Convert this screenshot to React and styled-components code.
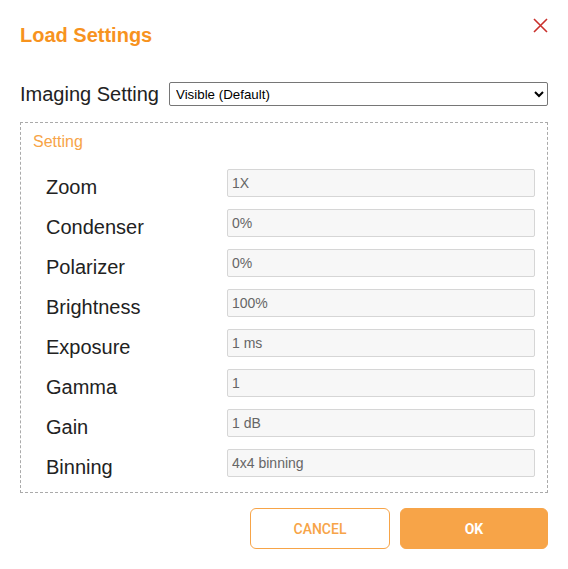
import styled, { createGlobalStyle } from 'styled-components'

const GlobalStyle = createGlobalStyle`
    body {
        margin: 0;
        background: #ffffff;
        font-family: "Liberation Sans", Arial, sans-serif;
    }
`

const Dialog = styled.div`
    position: relative;
    width: 568px;
    box-sizing: border-box;
    padding: 23px 20px 20px;
`

const Title = styled.h2`
    margin: 0;
    font-size: 20px;
    line-height: 24px;
    font-weight: bold;
    color: #f7931e;
`

const CloseButton = styled.button`
    position: absolute;
    top: 17px;
    right: 20px;
    width: 16px;
    height: 16px;
    padding: 0;
    border: none;
    background: none;
    cursor: pointer;
    display: flex;
    align-items: center;
    justify-content: center;
`

const ImagingRow = styled.div`
    display: flex;
    align-items: center;
    gap: 10px;
    margin-top: 35px;
    height: 24px;
`

const ImagingLabel = styled.label`
    font-size: 20px;
    line-height: 24px;
    color: #222;
    white-space: nowrap;
`

const Select = styled.select`
    flex: 1;
    height: 24px;
    font-family: "Liberation Sans", Arial, sans-serif;
    font-size: 13.33px;
    color: #000;
    border: 1px solid #767676;
    border-radius: 2px;
    background: #fff;
    padding: 0 2px;
`

const SettingBox = styled.fieldset`
    margin: 16px 0 0;
    border: 1px dashed #aaaaaa;
    padding: 10px 12px 15px;
`

const BoxTitle = styled.div`
    font-size: 16px;
    line-height: 18px;
    color: #f7a448;
`

const Rows = styled.div`
    display: flex;
    flex-direction: column;
    gap: 12px;
    margin-top: 18px;
    padding-left: 13px;
`

const Row = styled.div`
    display: grid;
    grid-template-columns: 181px 1fr;
    height: 28px;
`

const RowLabel = styled.span`
    font-size: 20px;
    line-height: 24px;
    padding-top: 6px;
    color: #222;
`

const ReadInput = styled.input`
    box-sizing: border-box;
    height: 28px;
    width: 100%;
    margin: 0;
    padding: 0 4px;
    border: 1px solid #d6d6d6;
    border-radius: 2px;
    background: #f7f7f7;
    color: #666;
    font-family: "Liberation Sans", Arial, sans-serif;
    font-size: 14px;
    outline: none;
`

const Footer = styled.div`
    display: flex;
    justify-content: flex-end;
    gap: 10px;
    margin-top: 15px;
`

const Button = styled.button`
    width: ${(p) => (p.$primary ? '148px' : '140px')};
    height: 41px;
    border-radius: 6px;
    border: 1px solid #f7a448;
    background: ${(p) => (p.$primary ? '#f7a448' : '#ffffff')};
    color: ${(p) => (p.$primary ? '#ffffff' : '#f7a448')};
    font-family: Roboto, "Liberation Sans", sans-serif;
    font-size: 14px;
    font-weight: ${(p) => (p.$primary ? 700 : 500)};
    cursor: pointer;
`

const settings = [
    ['Zoom', '1X'],
    ['Condenser', '0%'],
    ['Polarizer', '0%'],
    ['Brightness', '100%'],
    ['Exposure', '1 ms'],
    ['Gamma', '1'],
    ['Gain', '1 dB'],
    ['Binning', '4x4 binning'],
]

const App = () => {
    return (
        <Dialog>
            <GlobalStyle />
            <Title>Load Settings</Title>
            <CloseButton aria-label="close">
                <svg width="15" height="15" viewBox="0 0 15 15">
                    <path d="M1 1 L14 14 M14 1 L1 14" stroke="#c9302c" strokeWidth="1.6" />
                </svg>
            </CloseButton>

            <ImagingRow>
                <ImagingLabel>Imaging Setting</ImagingLabel>
                <Select defaultValue="visible">
                    <option value="visible">Visible (Default)</option>
                    <option value="fluorescence">Fluorescence</option>
                </Select>
            </ImagingRow>

            <SettingBox>
                <BoxTitle>Setting</BoxTitle>
                <Rows>
                    {settings.map(([label, value]) => (
                        <Row key={label}>
                            <RowLabel>{label}</RowLabel>
                            <ReadInput readOnly value={value} />
                        </Row>
                    ))}
                </Rows>
            </SettingBox>

            <Footer>
                <Button>CANCEL</Button>
                <Button $primary>OK</Button>
            </Footer>
        </Dialog>
    )
}

export default App
